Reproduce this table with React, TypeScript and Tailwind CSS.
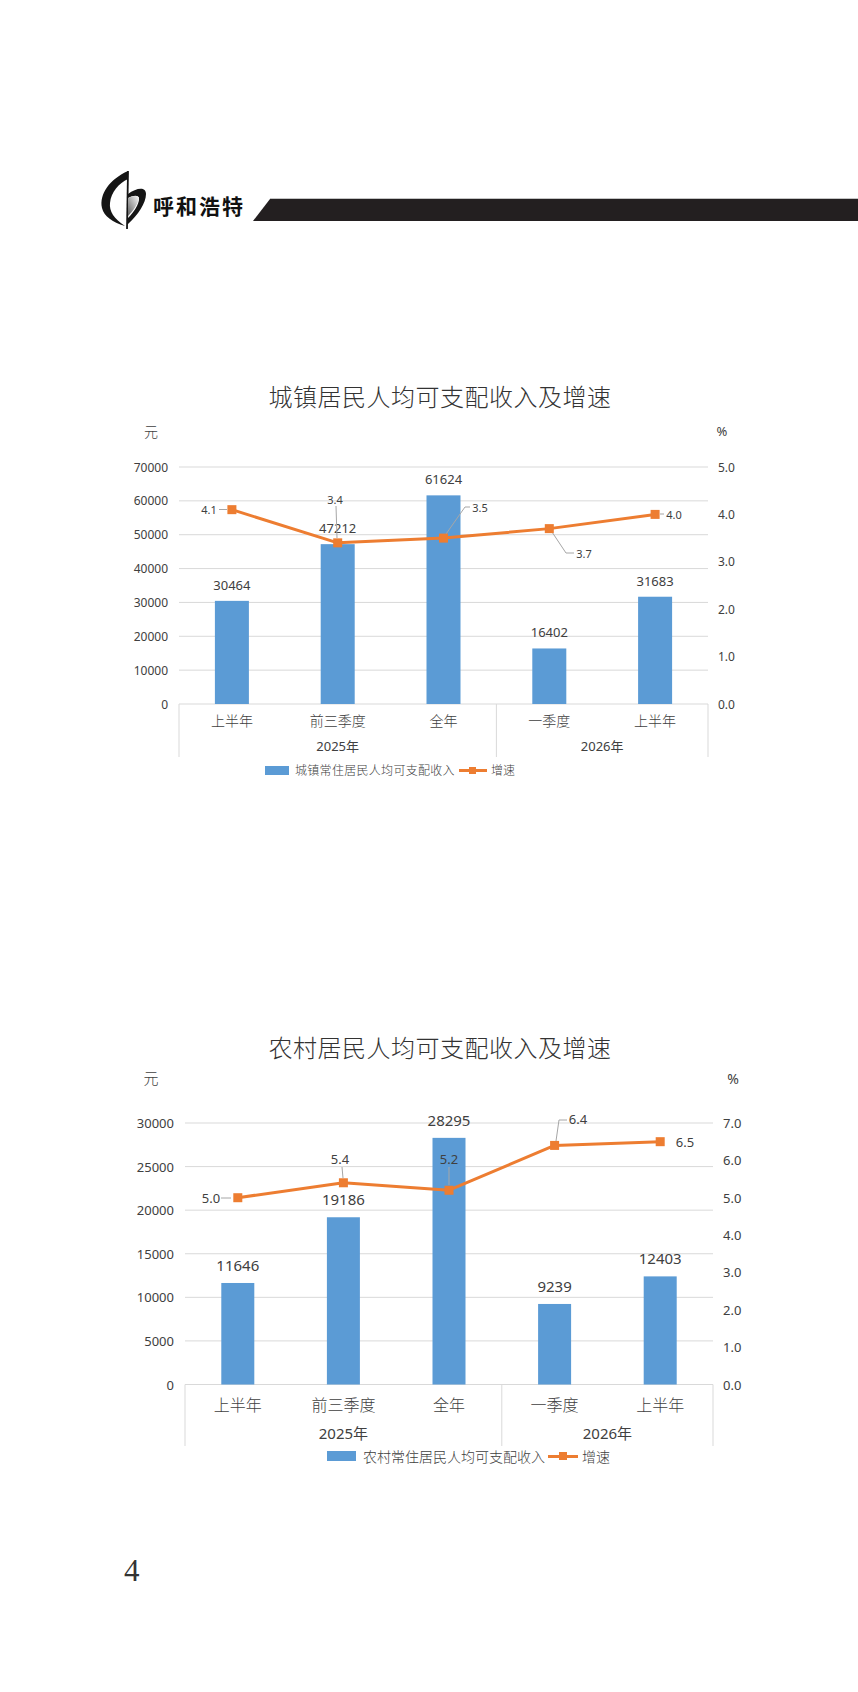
import React from "react";

type RateLabel = { x: number; y: number; leader: [number, number][] };

type ChartCfg = {
  title: string;
  legend: string;
  height: number;
  plotTop: number;
  plotBottom: number;
  plotLeft: number;
  plotRight: number;
  leftMax: number;
  leftStep: number;
  rightMax: number;
  leftEdge: number;
  rightStart: number;
  yuan: [number, number];
  pct: [number, number];
  axisSize: number;
  unitSize: number;
  catY: number;
  catSize: number;
  yearY: number;
  yearSize: number;
  tickBottom: number;
  barWidth: number;
  barLabelGap: number;
  barLabelSize: number;
  rateSize: number;
  bars: number[];
  rates: number[];
  rateLabels: RateLabel[];
};

const CATS = ["上半年", "前三季度", "全年", "一季度", "上半年"];
const BLUE = "#5b9bd5";
const ORANGE = "#ed7d31";
const GRID = "#d9d9d9";
const INK = "#404040";

const URBAN: ChartCfg = {
  title: "城镇居民人均可支配收入及增速",
  legend: "城镇常住居民人均可支配收入",
  height: 350,
  plotTop: 55,
  plotBottom: 292,
  plotLeft: 179,
  plotRight: 708,
  leftMax: 70000,
  leftStep: 10000,
  rightMax: 5,
  leftEdge: 168,
  rightStart: 718,
  yuan: [151, 19],
  pct: [722, 19],
  axisSize: 12,
  unitSize: 14,
  catY: 308,
  catSize: 14,
  yearY: 334,
  yearSize: 13,
  tickBottom: 345,
  barWidth: 34,
  barLabelGap: 16,
  barLabelSize: 13,
  rateSize: 11,
  bars: [30464, 47212, 61624, 16402, 31683],
  rates: [4.1, 3.4, 3.5, 3.7, 4.0],
  rateLabels: [
    { x: 209, y: 97.5, leader: [[219, 97.5], [227, 97.5]] },
    { x: 335, y: 87, leader: [[336, 94], [337, 126]] },
    { x: 480, y: 95, leader: [[470, 95], [465, 95], [446, 122]] },
    { x: 584, y: 141, leader: [[552, 120], [566, 141], [574, 141]] },
    { x: 674, y: 102, leader: [[660, 102], [664, 102]] },
  ],
};

const RURAL: ChartCfg = {
  title: "农村居民人均可支配收入及增速",
  legend: "农村常住居民人均可支配收入",
  height: 385,
  plotTop: 60,
  plotBottom: 321.5,
  plotLeft: 185,
  plotRight: 713,
  leftMax: 30000,
  leftStep: 5000,
  rightMax: 7,
  leftEdge: 174,
  rightStart: 723,
  yuan: [151, 14],
  pct: [733, 15],
  axisSize: 13,
  unitSize: 15,
  catY: 341,
  catSize: 16,
  yearY: 370,
  yearSize: 15,
  tickBottom: 383,
  barWidth: 33,
  barLabelGap: 18,
  barLabelSize: 15,
  rateSize: 13,
  bars: [11646, 19186, 28295, 9239, 12403],
  rates: [5.0, 5.4, 5.2, 6.4, 6.5],
  rateLabels: [
    { x: 211, y: 135, leader: [[221, 135], [231, 135]] },
    { x: 340, y: 96, leader: [[342, 104], [343, 115]] },
    { x: 449, y: 96, leader: [[449, 104], [449, 122]] },
    { x: 578, y: 56, leader: [[556, 78], [559, 57], [567, 57]] },
    { x: 685, y: 79, leader: [] },
  ],
};

// city emblem: black crescent, thin upright, right hook with a grey wedge
function Logo() {
  return (
    <svg width="50" height="60" viewBox="0 0 50 60" className="shrink-0">
      <defs>
        <linearGradient id="wedge" x1="1" y1="0" x2="0" y2="1">
          <stop offset="0" stopColor="#fafafa" />
          <stop offset="1" stopColor="#5e5e5e" />
        </linearGradient>
      </defs>
      <path d="M30 1 C12 9 1 24 4 38 C6 46 14 52 27 56 C16 49 11 41 12 33 C13 22 21 13 30 9 Z" fill="#151515" />
      <path d="M30 1 L29 59" stroke="#151515" strokeWidth="1.8" />
      <path d="M30 24 C38 18 48 16 48 24 C48 33 40 45 30 54 L30 48 C36 42 41 34 41 29 C41 25 36 25 30 28 Z" fill="#151515" />
      <path d="M30 28 C35 26 40 25 41 28 C40 34 35 41 30 46 Z" fill="url(#wedge)" />
    </svg>
  );
}

function Header() {
  return (
    <div className="flex items-start pt-[170px]">
      <div className="ml-[98px]">
        <Logo />
      </div>
      <div className="ml-[5px] mt-[23px] whitespace-nowrap font-['Noto_Sans_CJK_SC',sans-serif] text-[21px] font-bold leading-[24px] tracking-[2px] text-[#111]">
        呼和浩特
      </div>
      <div className="ml-[8px] mt-[28px] flex flex-1 flex-col">
        <div className="ml-[17px] h-px bg-[#c4c4c4]" />
        <div className="h-[22px] bg-[#231f20] [clip-path:polygon(17px_0,100%_0,100%_100%,0_100%)]" />
      </div>
    </div>
  );
}

function ChartBody({ c }: { c: ChartCfg }) {
  const step = (c.plotRight - c.plotLeft) / CATS.length;
  const cx = (i: number) => c.plotLeft + step * (i + 0.5);
  const span = c.plotBottom - c.plotTop;
  const yL = (v: number) => c.plotBottom - (v / c.leftMax) * span;
  const yR = (v: number) => c.plotBottom - (v / c.rightMax) * span;
  const leftTicks: number[] = [];
  for (let v = 0; v <= c.leftMax; v += c.leftStep) leftTicks.push(v);
  const rightTicks: number[] = [];
  for (let v = 0; v <= c.rightMax; v += 1) rightTicks.push(v);
  const sep = c.plotLeft + step * 3;
  const linePts = c.rates.map((r, i) => `${cx(i)},${yR(r)}`).join(" ");

  return (
    <svg width="858" height={c.height} viewBox={`0 0 858 ${c.height}`} className="block">
      <g className="font-['Noto_Sans_CJK_SC',sans-serif] font-light" fill={INK} fontSize={c.unitSize}>
        <text x={c.yuan[0]} y={c.yuan[1]} textAnchor="middle" dominantBaseline="central">元</text>
      </g>
      <g className="font-['Noto_Sans',sans-serif]" fill={INK}>
        <text x={c.pct[0]} y={c.pct[1]} fontSize={c.unitSize - 1} textAnchor="middle" dominantBaseline="central">%</text>
      </g>

      {leftTicks.map((v) => (
        <line key={v} x1={c.plotLeft} x2={c.plotRight} y1={yL(v)} y2={yL(v)} stroke={GRID} strokeWidth="1" />
      ))}

      <g className="font-['Noto_Sans',sans-serif]" fill={INK} fontSize={c.axisSize}>
        {leftTicks.map((v) => (
          <text key={v} x={c.leftEdge} y={yL(v)} textAnchor="end" dominantBaseline="central">
            {v}
          </text>
        ))}
        {rightTicks.map((v) => (
          <text key={v} x={c.rightStart} y={yR(v)} textAnchor="start" dominantBaseline="central">
            {v.toFixed(1)}
          </text>
        ))}
      </g>

      <g stroke={GRID} strokeWidth="1">
        <line x1={c.plotLeft} x2={c.plotLeft} y1={c.plotBottom} y2={c.tickBottom} />
        <line x1={sep} x2={sep} y1={c.plotBottom} y2={c.tickBottom} />
        <line x1={c.plotRight} x2={c.plotRight} y1={c.plotBottom} y2={c.tickBottom} />
      </g>

      {c.bars.map((v, i) => (
        <rect key={i} x={cx(i) - c.barWidth / 2} y={yL(v)} width={c.barWidth} height={c.plotBottom - yL(v)} fill={BLUE} />
      ))}

      <g className="font-['Noto_Sans',sans-serif]" fill={INK} fontSize={c.barLabelSize}>
        {c.bars.map((v, i) => (
          <text key={i} x={cx(i)} y={yL(v) - c.barLabelGap} textAnchor="middle" dominantBaseline="central">
            {v}
          </text>
        ))}
      </g>

      <g fill="none" stroke="#a6a6a6" strokeWidth="1">
        {c.rateLabels.map((l, i) =>
          l.leader.length ? <polyline key={i} points={l.leader.map((p) => p.join(",")).join(" ")} /> : null
        )}
      </g>

      <polyline points={linePts} fill="none" stroke={ORANGE} strokeWidth="3" strokeLinejoin="round" />
      {c.rates.map((r, i) => (
        <rect key={i} x={cx(i) - 4.5} y={yR(r) - 4.5} width="9" height="9" fill={ORANGE} />
      ))}

      <g className="font-['Noto_Sans',sans-serif]" fill={INK} fontSize={c.rateSize}>
        {c.rateLabels.map((l, i) => (
          <text key={i} x={l.x} y={l.y} textAnchor="middle" dominantBaseline="central">
            {c.rates[i].toFixed(1)}
          </text>
        ))}
      </g>

      <g className="font-['Noto_Sans_CJK_SC',sans-serif] font-light" fill={INK} fontSize={c.catSize}>
        {CATS.map((t, i) => (
          <text key={i} x={cx(i)} y={c.catY} textAnchor="middle" dominantBaseline="central">
            {t}
          </text>
        ))}
      </g>
      <g className="font-['Noto_Sans','Noto_Sans_CJK_SC',sans-serif]" fill={INK} fontSize={c.yearSize}>
        <text x={c.plotLeft + step * 1.5} y={c.yearY} textAnchor="middle" dominantBaseline="central">2025年</text>
        <text x={c.plotLeft + step * 4} y={c.yearY} textAnchor="middle" dominantBaseline="central">2026年</text>
      </g>
    </svg>
  );
}

function UrbanLegend() {
  return (
    <div className="flex h-[16px] items-center pl-[265px] font-['Noto_Sans_CJK_SC',sans-serif] text-[12px] font-light text-[#404040]">
      <span className="h-[9px] w-[24px] bg-[#5b9bd5]" />
      <span className="ml-[6px] leading-none tracking-[0.3px]">城镇常住居民人均可支配收入</span>
      <span className="relative ml-[4px] flex h-[9px] w-[28px] items-center justify-center">
        <span className="h-[3px] w-full bg-[#ed7d31]" />
        <span className="absolute h-[7px] w-[7px] bg-[#ed7d31]" />
      </span>
      <span className="ml-[4px] leading-none">增速</span>
    </div>
  );
}

function RuralLegend() {
  return (
    <div className="flex h-[16px] items-center pl-[327px] font-['Noto_Sans_CJK_SC',sans-serif] text-[14px] font-light text-[#404040]">
      <span className="h-[10px] w-[29px] bg-[#5b9bd5]" />
      <span className="ml-[7px] leading-none">农村常住居民人均可支配收入</span>
      <span className="relative ml-[3px] flex h-[10px] w-[30px] items-center justify-center">
        <span className="h-[3px] w-full bg-[#ed7d31]" />
        <span className="absolute h-[8px] w-[8px] bg-[#ed7d31]" />
      </span>
      <span className="ml-[4px] leading-none">增速</span>
    </div>
  );
}

function Title({ text }: { text: string }) {
  return (
    <div className="h-[32px] pl-[22px] text-center font-['Noto_Sans_CJK_SC',sans-serif] text-[24px] font-light leading-[32px] tracking-[0.5px] text-[#333]">
      {text}
    </div>
  );
}

export default function App() {
  return (
    <div className="flex h-[1692px] w-[858px] flex-col bg-white">
      <Header />

      <div className="mt-[150px]">
        <Title text={URBAN.title} />
        <ChartBody c={URBAN} />
        <UrbanLegend />
      </div>

      <div className="mt-[253px]">
        <Title text={RURAL.title} />
        <ChartBody c={RURAL} />
        <RuralLegend />
      </div>

      <div className="mt-[91px] pl-[124px] font-['Liberation_Serif',serif] text-[31px] leading-[31px] text-[#333]">
        4
      </div>
    </div>
  );
}
